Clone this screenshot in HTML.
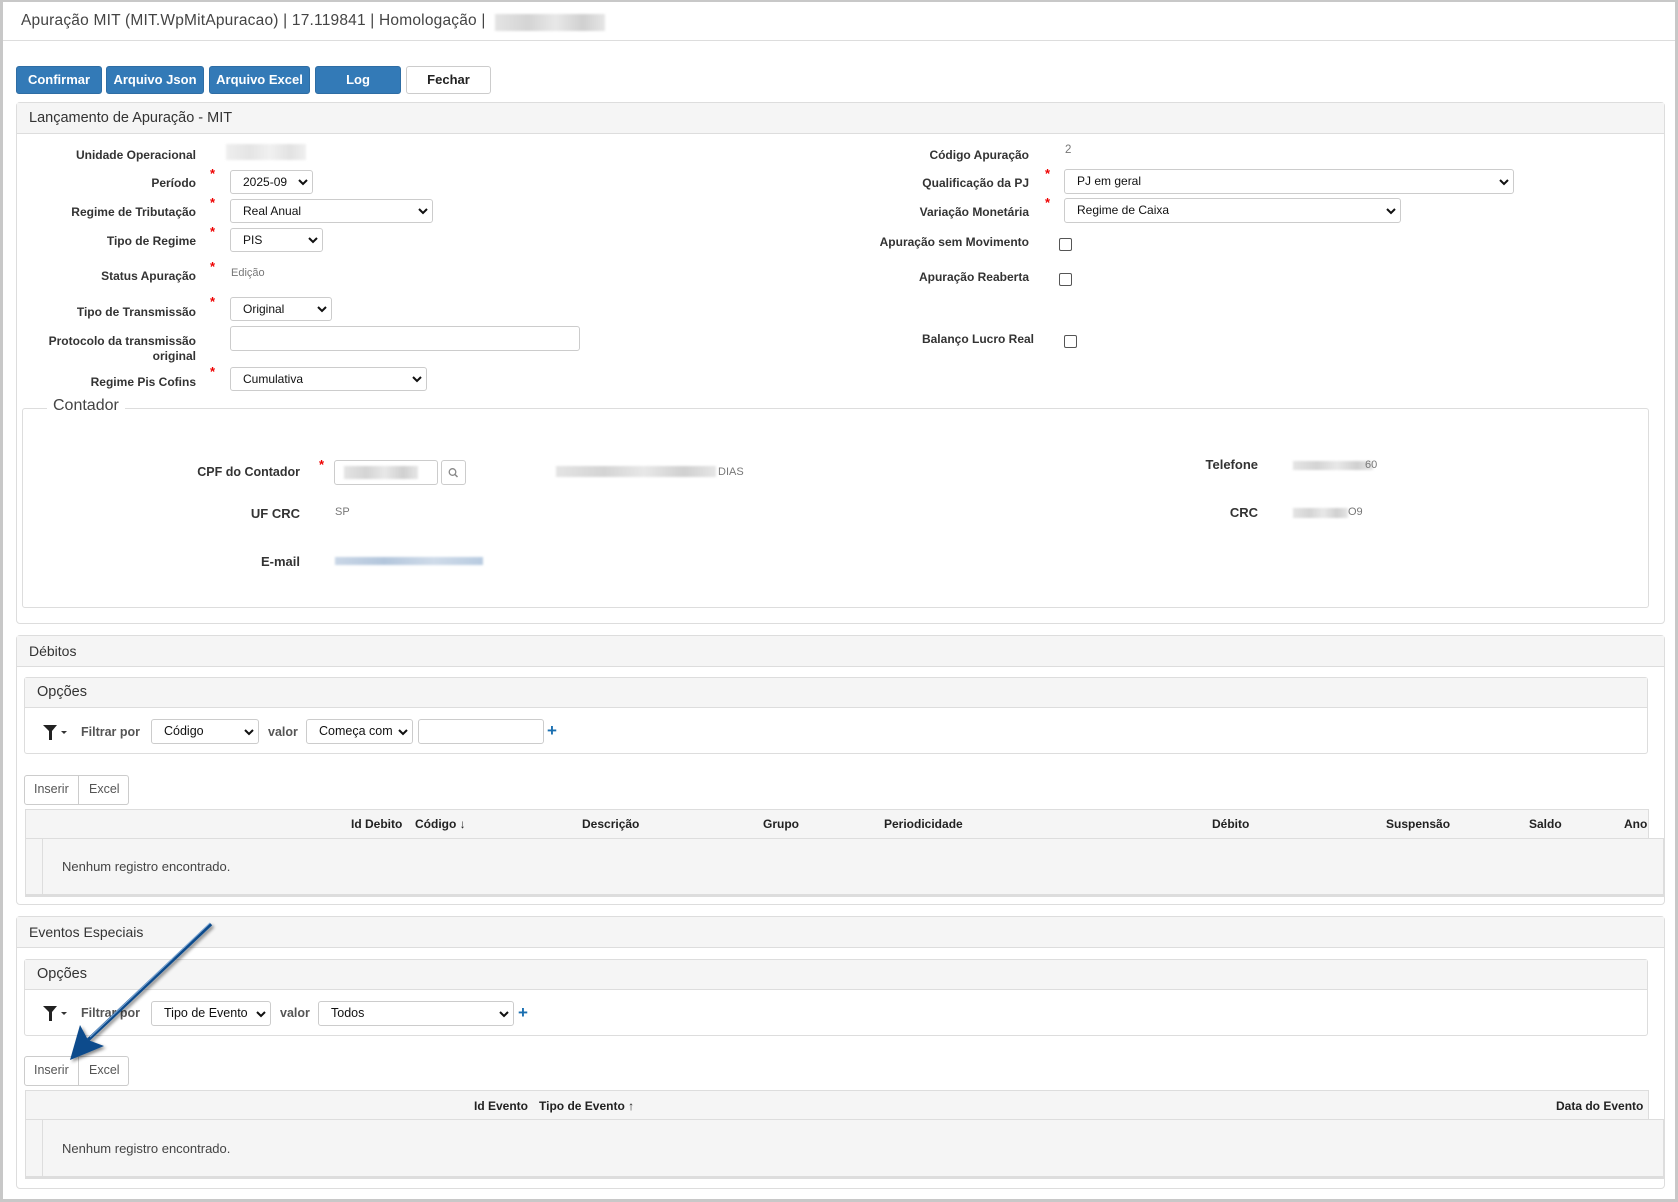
<!DOCTYPE html>
<html><head><meta charset="utf-8">
<style>
*{box-sizing:border-box;margin:0;padding:0}
body{width:1678px;height:1202px;position:relative;background:#fff;font-family:"Liberation Sans",Arial,sans-serif;overflow:hidden;color:#333}
.a{position:absolute}
.frame{position:absolute;left:0;top:0;width:1678px;height:1202px;border:3px solid #c8c8c8;border-top-width:2px}
.btn{position:absolute;top:66px;height:28px;border-radius:3px;background:#337ab7;border:1px solid #2e6da4;color:#fff;font-weight:bold;font-size:13px;text-align:center;line-height:26px}
.panel{position:absolute;border:1px solid #ddd;border-radius:4px;background:#fff}
.ph{position:absolute;left:0;top:0;right:0;background:#f5f5f5;border-bottom:1px solid #ddd;font-size:14.5px;color:#333;padding-left:12px}
.lbl{position:absolute;font-weight:bold;font-size:12px;color:#333;text-align:right;white-space:nowrap}
.req{position:absolute;color:#e00;font-size:13px;font-weight:bold}
.sel{position:absolute;border:1px solid #ccc;border-radius:3px;background:#fff;font-size:12px;color:#111;padding-left:12px;white-space:nowrap;overflow:hidden}
.sel svg{position:absolute;right:4px;top:50%;margin-top:-4px}
.inp{position:absolute;border:1px solid #ccc;border-radius:3px;background:#fff}
.val{position:absolute;font-size:11.5px;color:#777}
.cb{position:absolute;width:13px;height:13px;border:1px solid #555;border-radius:2px;background:#fff}
.blur{position:absolute;background:linear-gradient(90deg,#e4e4e4,#d4d4d4 30%,#e8e8e8 55%,#d0d0d0 80%,#e6e6e6);filter:blur(1px)}
.th{position:absolute;font-weight:bold;font-size:12px;color:#222;white-space:nowrap}
.flt{position:absolute;font-weight:bold;font-size:12.5px;color:#555}
.plus{position:absolute;color:#1a6fb0;font-weight:bold;font-size:17px}
.bg{position:absolute;height:30px;border:1px solid #ccc;border-radius:3px;background:#fff;font-size:12.5px;color:#555}
.bg span{position:absolute;top:6px}
</style></head><body>
<div class="frame"></div>
<div class="a" style="left:21px;top:12px;font-size:15.5px;color:#444;letter-spacing:0.2px">Apuração MIT (MIT.WpMitApuracao) | 17.119841 | Homologação |</div>
<div class="blur" style="left:495px;top:14px;width:110px;height:17px"></div>
<div class="a" style="left:3px;top:40px;width:1672px;height:1px;background:#ddd"></div>

<div class="btn" style="left:16px;width:86px">Confirmar</div>
<div class="btn" style="left:106px;width:98px">Arquivo Json</div>
<div class="btn" style="left:209px;width:101px">Arquivo Excel</div>
<div class="btn" style="left:315px;width:86px">Log</div>
<div class="btn" style="left:406px;width:85px;background:#fff;color:#222;border-color:#ccc">Fechar</div>

<div class="panel" style="left:16px;top:102px;width:1649px;height:522px">
 <div class="ph" style="height:31px;line-height:30px">Lançamento de Apuração - MIT</div>
</div>
<div class="lbl" style="right:1482px;top:148px">Unidade Operacional</div>
<div class="blur" style="left:226px;top:144px;width:80px;height:16px;opacity:.6"></div>
<div class="lbl" style="right:1482px;top:176px">Período</div>
<div class="req" style="left:210px;top:166px">*</div>
<div class="sel" style="left:230px;top:170px;width:83px;height:24px;line-height:22px">2025-09<svg width="10" height="8"><path d="M1 2l4 4 4-4" stroke="#111" stroke-width="2" fill="none"/></svg></div>
<div class="lbl" style="right:1482px;top:205px">Regime de Tributação</div>
<div class="req" style="left:210px;top:195px">*</div>
<div class="sel" style="left:230px;top:199px;width:203px;height:24px;line-height:22px">Real Anual<svg width="10" height="8"><path d="M1 2l4 4 4-4" stroke="#111" stroke-width="2" fill="none"/></svg></div>
<div class="lbl" style="right:1482px;top:234px">Tipo de Regime</div>
<div class="req" style="left:210px;top:224px">*</div>
<div class="sel" style="left:230px;top:228px;width:93px;height:24px;line-height:22px">PIS<svg width="10" height="8"><path d="M1 2l4 4 4-4" stroke="#111" stroke-width="2" fill="none"/></svg></div>
<div class="lbl" style="right:1482px;top:269px">Status Apuração</div>
<div class="req" style="left:210px;top:259px">*</div>
<div class="val" style="left:231px;top:267px;font-size:11px">Edição</div>
<div class="lbl" style="right:1482px;top:305px">Tipo de Transmissão</div>
<div class="req" style="left:210px;top:294px">*</div>
<div class="sel" style="left:230px;top:297px;width:102px;height:24px;line-height:22px">Original<svg width="10" height="8"><path d="M1 2l4 4 4-4" stroke="#111" stroke-width="2" fill="none"/></svg></div>
<div class="lbl" style="right:1482px;top:334px;line-height:15px">Protocolo da transmissão<br>original</div>
<div class="inp" style="left:230px;top:326px;width:350px;height:25px"></div>
<div class="lbl" style="right:1482px;top:375px">Regime Pis Cofins</div>
<div class="req" style="left:210px;top:364px">*</div>
<div class="sel" style="left:230px;top:367px;width:197px;height:24px;line-height:22px">Cumulativa<svg width="10" height="8"><path d="M1 2l4 4 4-4" stroke="#111" stroke-width="2" fill="none"/></svg></div>

<div class="lbl" style="right:649px;top:148px">Código Apuração</div>
<div class="val" style="left:1065px;top:144px">2</div>
<div class="lbl" style="right:649px;top:176px">Qualificação da PJ</div>
<div class="req" style="left:1045px;top:166px">*</div>
<div class="sel" style="left:1064px;top:169px;width:450px;height:25px;line-height:23px">PJ em geral<svg width="10" height="8"><path d="M1 2l4 4 4-4" stroke="#111" stroke-width="2" fill="none"/></svg></div>
<div class="lbl" style="right:649px;top:205px">Variação Monetária</div>
<div class="req" style="left:1045px;top:195px">*</div>
<div class="sel" style="left:1064px;top:198px;width:337px;height:25px;line-height:23px">Regime de Caixa<svg width="10" height="8"><path d="M1 2l4 4 4-4" stroke="#111" stroke-width="2" fill="none"/></svg></div>
<div class="lbl" style="right:649px;top:235px">Apuração sem Movimento</div>
<div class="cb" style="left:1059px;top:238px"></div>
<div class="lbl" style="right:649px;top:270px">Apuração Reaberta</div>
<div class="cb" style="left:1059px;top:273px"></div>
<div class="lbl" style="right:644px;top:332px">Balanço Lucro Real</div>
<div class="cb" style="left:1064px;top:335px"></div>

<div class="a" style="left:22px;top:408px;width:1627px;height:200px;border:1px solid #ddd;border-radius:3px"></div>
<div class="a" style="left:47px;top:397px;padding:0 6px;background:#fff;font-size:16px;color:#444">Contador</div>
<div class="lbl" style="right:1378px;top:465px;font-size:12.5px">CPF do Contador</div>
<div class="req" style="left:319px;top:457px">*</div>
<div class="inp" style="left:334px;top:460px;width:104px;height:25px"></div>
<div class="blur" style="left:344px;top:466px;width:74px;height:13px"></div>
<div class="inp" style="left:441px;top:460px;width:25px;height:25px"><svg width="23" height="23"><circle cx="10.5" cy="11" r="3.3" stroke="#888" stroke-width="1.3" fill="none"/><path d="M13 13.5l2.5 2.5" stroke="#888" stroke-width="1.5"/></svg></div>
<div class="blur" style="left:556px;top:466px;width:160px;height:11px"></div>
<div class="val" style="left:718px;top:466px;font-size:11px">DIAS</div>
<div class="lbl" style="right:1378px;top:506px;font-size:13px">UF CRC</div>
<div class="val" style="left:335px;top:506px;font-size:11px">SP</div>
<div class="lbl" style="right:1378px;top:554px;font-size:13px">E-mail</div>
<div class="blur" style="left:335px;top:557px;width:148px;height:8px;background:linear-gradient(90deg,#c9d6e6,#b3c6dc,#cfdbe9,#b8cbe0)"></div>
<div class="lbl" style="right:420px;top:457px;font-size:13px">Telefone</div>
<div class="blur" style="left:1293px;top:461px;width:80px;height:9px"></div>
<div class="val" style="left:1365px;top:459px;font-size:11px">60</div>
<div class="lbl" style="right:420px;top:505px;font-size:13px">CRC</div>
<div class="blur" style="left:1293px;top:508px;width:55px;height:10px"></div>
<div class="val" style="left:1348px;top:506px;font-size:11px">O9</div>

<div class="panel" style="left:16px;top:635px;width:1649px;height:270px">
 <div class="ph" style="height:31px;line-height:30px;font-size:14px">Débitos</div>
</div>
<div class="panel" style="left:24px;top:677px;width:1624px;height:77px;border-radius:3px">
 <div class="ph" style="height:30px;line-height:29px;font-size:14.5px">Opções</div>
</div>
<svg class="a" style="left:42px;top:724px" width="26" height="18"><path d="M1 1h14l-5 6v9h-3v-9z" fill="#222"/><path d="M19 7h6l-3 3z" fill="#333"/></svg>
<div class="flt" style="left:81px;top:725px">Filtrar por</div>
<div class="sel" style="left:151px;top:719px;width:108px;height:25px;line-height:23px;font-size:12.5px">Código<svg width="10" height="8"><path d="M1 2l4 4 4-4" stroke="#111" stroke-width="2" fill="none"/></svg></div>
<div class="flt" style="left:268px;top:725px">valor</div>
<div class="sel" style="left:306px;top:719px;width:107px;height:25px;line-height:23px;font-size:12.5px">Começa com<svg width="10" height="8"><path d="M1 2l4 4 4-4" stroke="#111" stroke-width="2" fill="none"/></svg></div>
<div class="inp" style="left:418px;top:719px;width:126px;height:25px"></div>
<div class="plus" style="left:547px;top:721px">+</div>
<div class="bg" style="left:24px;top:775px;width:105px"><span style="left:9px">Inserir</span><div class="a" style="left:53px;top:0;width:1px;height:28px;background:#ccc"></div><span style="left:64px">Excel</span></div>
<div class="a" style="left:25px;top:809px;width:1624px;height:30px;background:#f5f5f5;border:1px solid #ddd"></div>
<div class="a" style="left:25px;top:838px;width:1639px;height:59px;background:#f5f5f5;border:1px solid #ddd;border-bottom:3px solid #ddd"></div>
<div class="a" style="left:42px;top:839px;width:1px;height:56px;background:#ddd"></div>
<div class="th" style="left:351px;top:817px">Id Debito</div>
<div class="th" style="left:415px;top:817px">Código ↓</div>
<div class="th" style="left:582px;top:817px">Descrição</div>
<div class="th" style="left:763px;top:817px">Grupo</div>
<div class="th" style="left:884px;top:817px">Periodicidade</div>
<div class="th" style="left:1212px;top:817px">Débito</div>
<div class="th" style="left:1386px;top:817px">Suspensão</div>
<div class="th" style="left:1529px;top:817px">Saldo</div>
<div class="th" style="left:1624px;top:817px">Ano</div>
<div class="a" style="left:62px;top:859px;font-size:13px;color:#444">Nenhum registro encontrado.</div>

<div class="panel" style="left:16px;top:916px;width:1649px;height:273px">
 <div class="ph" style="height:31px;line-height:30px;font-size:14px">Eventos Especiais</div>
</div>
<div class="panel" style="left:24px;top:959px;width:1624px;height:77px;border-radius:3px">
 <div class="ph" style="height:30px;line-height:29px;font-size:14.5px">Opções</div>
</div>
<svg class="a" style="left:42px;top:1005px" width="26" height="18"><path d="M1 1h14l-5 6v9h-3v-9z" fill="#222"/><path d="M19 7h6l-3 3z" fill="#333"/></svg>
<div class="flt" style="left:81px;top:1006px">Filtrar por</div>
<div class="sel" style="left:151px;top:1001px;width:120px;height:25px;line-height:23px;font-size:12.5px">Tipo de Evento<svg width="10" height="8"><path d="M1 2l4 4 4-4" stroke="#111" stroke-width="2" fill="none"/></svg></div>
<div class="flt" style="left:280px;top:1006px">valor</div>
<div class="sel" style="left:318px;top:1001px;width:196px;height:25px;line-height:23px;font-size:12.5px">Todos<svg width="10" height="8"><path d="M1 2l4 4 4-4" stroke="#111" stroke-width="2" fill="none"/></svg></div>
<div class="plus" style="left:518px;top:1003px">+</div>
<div class="bg" style="left:24px;top:1056px;width:105px"><span style="left:9px">Inserir</span><div class="a" style="left:53px;top:0;width:1px;height:28px;background:#ccc"></div><span style="left:64px">Excel</span></div>
<div class="a" style="left:25px;top:1090px;width:1624px;height:30px;background:#f5f5f5;border:1px solid #ddd"></div>
<div class="a" style="left:25px;top:1119px;width:1639px;height:60px;background:#f5f5f5;border:1px solid #ddd;border-bottom:3px solid #ddd"></div>
<div class="a" style="left:42px;top:1120px;width:1px;height:57px;background:#ddd"></div>
<div class="th" style="left:474px;top:1099px">Id Evento</div>
<div class="th" style="left:539px;top:1099px">Tipo de Evento ↑</div>
<div class="th" style="left:1556px;top:1099px">Data do Evento</div>
<div class="a" style="left:62px;top:1141px;font-size:13px;color:#444">Nenhum registro encontrado.</div>

<svg class="a" style="left:0;top:0" width="1678" height="1202">
 <defs><filter id="sh"><feDropShadow dx="2" dy="2" stdDeviation="1.5" flood-color="#000" flood-opacity=".45"/></filter></defs>
 <g filter="url(#sh)">
  <line x1="211" y1="924" x2="88" y2="1040" stroke="#0f4c8c" stroke-width="3.5"/>
  <line x1="210" y1="923" x2="90" y2="1037" stroke="#7ea8d6" stroke-width="1"/>
  <path d="M70 1060 L80 1025 L88 1040 L104 1046 Z" fill="#0f4c8c"/>
 </g>
</svg>
</body></html>
